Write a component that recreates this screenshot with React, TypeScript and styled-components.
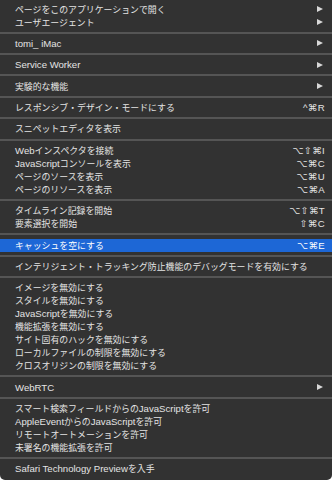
import React from "react";
import styled, { createGlobalStyle } from "styled-components";

const Global = createGlobalStyle`
  html, body { margin: 0; padding: 0; background: #ffffff; }
  body { width: 332px; height: 480px; overflow: hidden; }
`;

const Menu = styled.div`
  width: 332px;
  height: 480px;
  box-sizing: border-box;
  background: #323232;
  border-radius: 0 0 5px 5px;
  padding-top: 2.5px;
  display: flex;
  flex-direction: column;
  font-family: "Liberation Sans", "Noto Sans CJK JP", sans-serif;
  font-size: 9.6px;
  color: #e4e4e4;
  overflow: hidden;
`;

const Item = styled.div<{ $active?: boolean }>`
  height: 13px;
  flex-shrink: 0;
  display: flex;
  align-items: center;
  justify-content: space-between;
  padding: 0 7px 0 15px;
  background: ${(p) => (p.$active ? "#1d67d6" : "transparent")};
  color: ${(p) => (p.$active ? "#ffffff" : "#e4e4e4")};
  white-space: nowrap;
  line-height: 13px;
`;

const Label = styled.span`
  display: block;
`;

const Separator = styled.div`
  height: 2px;
  flex-shrink: 0;
  background: #555555;
  margin: 3.2px 0;
`;

const Cjk = styled.span`
  font-family: "Noto Sans CJK JP", sans-serif;
  font-size: 8.9px;
`;

const Shortcut = styled.span`
  font-family: "Liberation Sans", "DejaVu Sans", sans-serif;
  font-size: 9.6px;
  letter-spacing: 0.3px;
`;

const Arrow = styled.span`
  width: 0;
  height: 0;
  border-left: 6.5px solid #d8d8d8;
  border-top: 3.5px solid transparent;
  border-bottom: 3.5px solid transparent;
  margin-right: 1.7px;
`;

type MenuItem = {
  label: string;
  shortcut?: string;
  submenu?: boolean;
  active?: boolean;
};

const groups: MenuItem[][] = [
  [
    { label: "ページをこのアプリケーションで開く", submenu: true },
    { label: "ユーザエージェント", submenu: true },
  ],
  [{ label: "tomi_ iMac", submenu: true }],
  [{ label: "Service Worker", submenu: true }],
  [{ label: "実験的な機能", submenu: true }],
  [{ label: "レスポンシブ・デザイン・モードにする", shortcut: "^⌘R" }],
  [{ label: "スニペットエディタを表示" }],
  [
    { label: "Webインスペクタを接続", shortcut: "⌥⇧⌘I" },
    { label: "JavaScriptコンソールを表示", shortcut: "⌥⌘C" },
    { label: "ページのソースを表示", shortcut: "⌥⌘U" },
    { label: "ページのリソースを表示", shortcut: "⌥⌘A" },
  ],
  [
    { label: "タイムライン記録を開始", shortcut: "⌥⇧⌘T" },
    { label: "要素選択を開始", shortcut: "⇧⌘C" },
  ],
  [{ label: "キャッシュを空にする", shortcut: "⌥⌘E", active: true }],
  [{ label: "インテリジェント・トラッキング防止機能のデバッグモードを有効にする" }],
  [
    { label: "イメージを無効にする" },
    { label: "スタイルを無効にする" },
    { label: "JavaScriptを無効にする" },
    { label: "機能拡張を無効にする" },
    { label: "サイト固有のハックを無効にする" },
    { label: "ローカルファイルの制限を無効にする" },
    { label: "クロスオリジンの制限を無効にする" },
  ],
  [{ label: "WebRTC", submenu: true }],
  [
    { label: "スマート検索フィールドからのJavaScriptを許可" },
    { label: "AppleEventからのJavaScriptを許可" },
    { label: "リモートオートメーションを許可" },
    { label: "未署名の機能拡張を許可" },
  ],
  [{ label: "Safari Technology Previewを入手" }],
];

const CJK_RE = /([\u3000-\u30ff\u4e00-\u9fff\uff00-\uffef]+)/;

function renderLabel(text: string) {
  return text.split(CJK_RE).map((part, i) =>
    part === "" ? null : CJK_RE.test(part) ? <Cjk key={i}>{part}</Cjk> : <React.Fragment key={i}>{part}</React.Fragment>
  );
}

export default function App() {
  return (
    <>
      <Global />
      <Menu>
        {groups.map((group, gi) => (
          <React.Fragment key={gi}>
            {gi > 0 && <Separator />}
            {group.map((item, ii) => (
              <Item key={ii} $active={item.active}>
                <Label>{renderLabel(item.label)}</Label>
                {item.shortcut && <Shortcut>{item.shortcut}</Shortcut>}
                {item.submenu && <Arrow />}
              </Item>
            ))}
          </React.Fragment>
        ))}
      </Menu>
    </>
  );
}
